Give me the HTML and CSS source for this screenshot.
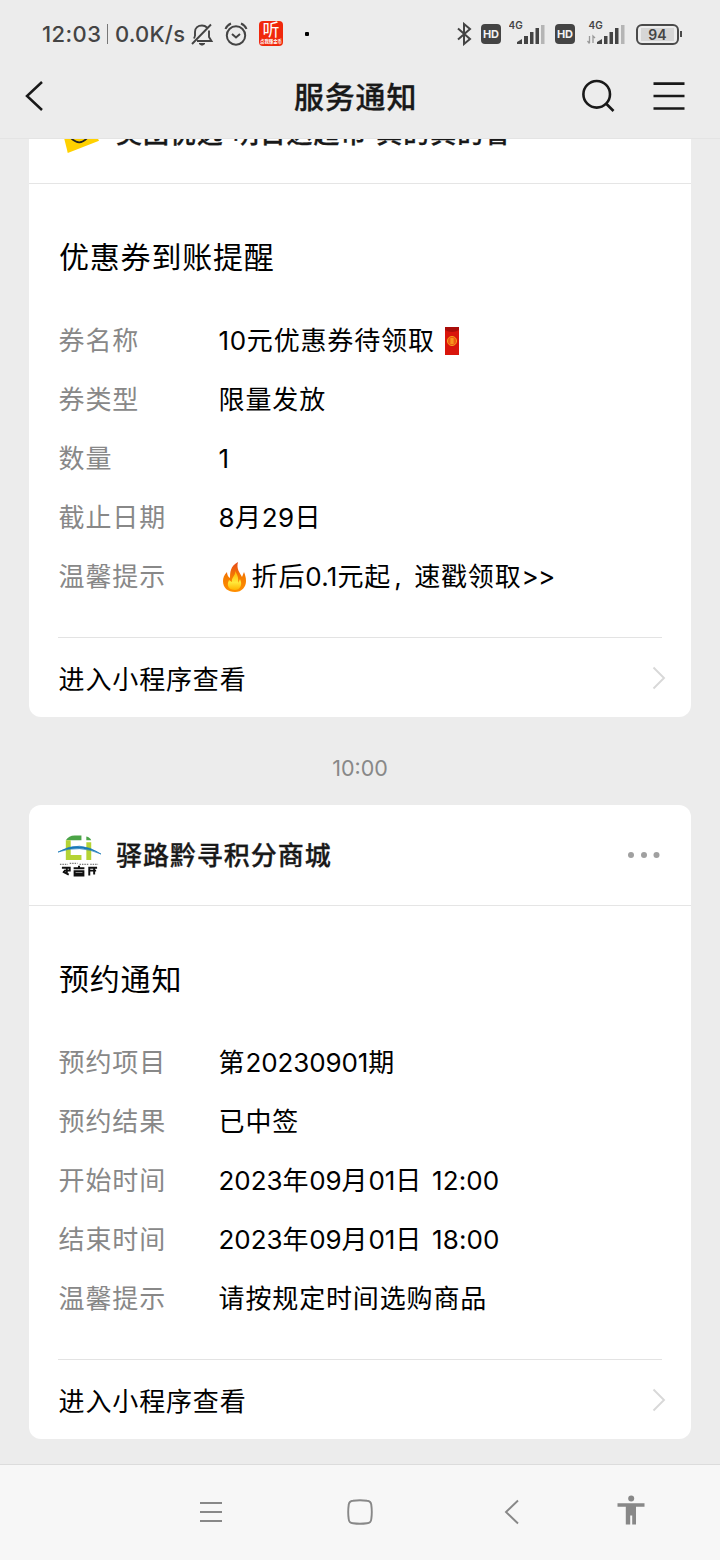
FILE: index.html
```
<!DOCTYPE html>
<html lang="zh-CN">
<head>
<meta charset="utf-8">
<title>服务通知</title>
<link rel="stylesheet" href="styles.css">
</head>
<body>
<div class="screen">
  <header class="top">
    <div class="status">
      <span class="clock">12:03</span><i class="sep"></i><span class="speed">0.0K/s</span>
      <svg class="bell" width="24" height="26" viewBox="0 0 24 26" fill="none" stroke="#444" stroke-width="1.9"><path d="M5 15V11C5 7 8 4.500 12 4.500C14 4.500 16 5.500 17 6.500M19 9.500V16L21.500 20H7M4 17.500L5 15M2 23L21 3.500"/><path d="M9 22.500h6l-2 1.500h-2z" fill="#444" stroke-width="1"/></svg>
      <svg class="alarm" width="24" height="26" viewBox="0 0 24 26" fill="none" stroke="#444" stroke-width="2"><circle cx="12" cy="14.500" r="9.200"/><path d="M8 13l4 3.500 4-3.500M1.500 8C2.500 5.500 4.500 3.500 7 2.500M22.500 8C21.500 5.500 19.500 3.500 17 2.500"/></svg>
      <span class="app"><b>听</b><small>点我赚金币</small></span>
      <i class="dot"></i>
      <svg class="bt" width="16" height="24" viewBox="0 0 16 24" fill="none" stroke="#444" stroke-width="2"><path d="M2 6.500L14 17L8 22V2l6 5L2 17.500"/></svg>
      <span class="hd">HD</span>
      <svg class="signal s1" width="40" height="26" viewBox="0 0 40 26"><text x="-.5" y="9" class="gen">4G</text><path fill="#444" d="M8 24v-2l5-3v5zM15 24v-8h4v8zM21 24V12h3.500v12zM26.500 24V8H30v16z"/><path fill="#b5b5b5" d="M32 24V5h3.500v19z"/></svg>
      <span class="hd">HD</span>
      <svg class="signal s2" width="40" height="26" viewBox="0 0 40 26"><text x="1.500" y="9" class="gen">4G</text><path d="M2.500 16v7M.5 21l2 2.500M6 23v-7l2 2" fill="none" stroke="#999" stroke-width="1.300"/><path fill="#444" d="M10 24v-2l5-3v5zM17 24v-8h3.500v8zM22.500 24V12H26v12zM28 24V8h3.500v16z"/><path fill="#b5b5b5" d="M34 24V5h3.500v19z"/></svg>
      <span class="battery"><span>94</span></span><i class="cap"></i>
    </div>
    <div class="title-bar">
      <svg class="back" width="24" height="36" viewBox="0 0 24 36" fill="none" stroke="#191919" stroke-width="2.500"><path d="M19 4L4 18L19 32"/></svg>
      <h1>服务通知</h1>
      <svg class="search" width="36" height="36" viewBox="0 0 36 36" fill="none" stroke="#191919" stroke-width="2.600"><circle cx="16.700" cy="16.300" r="13.300"/><path d="M26 25.500l7.500 7.500"/></svg>
      <svg class="menu" width="32" height="30" viewBox="0 0 32 30" stroke="#191919" stroke-width="2.700"><path d="M.5 2.700h31M.5 15h31M.5 27.500h31"/></svg>
    </div>
  </header>

  <main class="feed">
    <section class="card first">
      <div class="card-head">
        <svg class="logo" width="44" height="44" viewBox="0 0 44 44"><path fill="#ffd100" d="M4 18L31 8L42 30L10 42.500z"/><path d="M13 27q9 9 17 0" fill="none" stroke="#222" stroke-width="1.800"/></svg>
        <h2>美团优选 明日达超市 真的真的省</h2>
      </div>
      <div class="card-body">
        <h3>优惠券到账提醒</h3>
        <dl>
          <dt>券名称</dt><dd><span class="n ten">10</span>元优惠券待领取<svg class="packet" width="16" height="28" viewBox="0 0 16 28"><path fill="#d9150b" d="M1 0h14v28H1z"/><path fill="#a90d0a" d="M1 0h14v3q-7 4-14 0z"/><circle cx="8" cy="14" r="4.600" fill="#ee5a12" stroke="#f49a1a"/><path d="M6 12h4M6 14h4M6 16h4M8 11v6" stroke="#ffc22a" stroke-width=".7"/></svg></dd>
          <dt>券类型</dt><dd>限量发放</dd>
          <dt>数量</dt><dd><span class="n">1</span></dd>
          <dt>截止日期</dt><dd><span class="n date">8</span>月<span class="n date">29</span>日</dd>
          <dt>温馨提示</dt><dd><svg class="fire" width="26" height="32" viewBox="0 0 26 32"><defs><linearGradient id="flame" x2="0" y2="1"><stop stop-color="#e64a19"/><stop offset=".5" stop-color="#f57c00"/><stop offset="1" stop-color="#ff8f00"/></linearGradient><linearGradient id="core" x2="0" y2="1"><stop stop-color="#ffb300"/><stop offset=".6" stop-color="#ffe83b"/><stop offset="1" stop-color="#ffb300"/></linearGradient></defs><path fill="url(#flame)" d="M16 1C8 5 8 12 8 17C6 16 5 13 5 11C2 14 1 17 1 20C1 27 6 31 13 31C20 31 24 26 24 20C24 16 23 14 22 11L20 16C18 12 14 8 16 1z"/><path fill="url(#core)" d="M13 10C14 15 9 16 10 21L7 19C4 25 7 29 13 29C18 29 21 24 18 18L16 22C17 17 15 13 13 10z"/></svg>折后<span class="n price">0.1</span>元起<span class="comma">,</span>速戳领取<span class="n gt">&gt;&gt;</span></dd>
        </dl>
      </div>
      <div class="card-foot"><span>进入小程序查看</span><svg width="14" height="24" viewBox="0 0 14 24" fill="none" stroke="#d8d8d8" stroke-width="1.900"><path d="M1.500 1.500L12 12L1.500 22.500"/></svg></div>
    </section>

    <time>10:00</time>

    <section class="card">
      <div class="card-head">
        <svg class="logo" width="44" height="44" viewBox="0 0 44 44"><path fill="#4ba447" d="M8 7q3-5 9-5h7v5z"/><path fill="#b5d334" d="M8 7h5v15h11v5H8zM29 9h5v18h-5z"/><path fill="#4ba447" d="M29 3q4 1 5 4h-5z"/><path d="M0 19Q22 6 44 21Q22 11 0 19z" fill="#1878b8" stroke="#1878b8" stroke-width=".7"/><path d="M2 31.500h8m2-1h8m2 1h9m2 0h8" stroke="#555" stroke-width="1" stroke-dasharray="1.500 1"/><path d="M4 35h8v3H6M9 35v7M5 39l6 3M16 35.500h11M21.500 33v3M17 38.500h9V43h-9zM17 41h9M32 43v-8h8M32 38h7M37 35v7" fill="none" stroke="#111" stroke-width="2"/></svg>
        <h2>驿路黔寻积分商城</h2>
        <svg class="more" width="34" height="8" viewBox="0 0 34 8" fill="#a0a0a0"><circle cx="4" cy="4" r="3"/><circle cx="17" cy="4" r="3"/><circle cx="29.500" cy="4" r="3"/></svg>
      </div>
      <div class="card-body">
        <h3>预约通知</h3>
        <dl>
          <dt>预约项目</dt><dd>第<span class="n">20230901</span>期</dd>
          <dt>预约结果</dt><dd>已中签</dd>
          <dt>开始时间</dt><dd><span class="n">2023</span>年<span class="n">09</span>月<span class="n">01</span>日<span class="n hour">12:00</span></dd>
          <dt>结束时间</dt><dd><span class="n">2023</span>年<span class="n">09</span>月<span class="n">01</span>日<span class="n hour">18:00</span></dd>
          <dt>温馨提示</dt><dd>请按规定时间选购商品</dd>
        </dl>
      </div>
      <div class="card-foot"><span>进入小程序查看</span><svg width="14" height="24" viewBox="0 0 14 24" fill="none" stroke="#d8d8d8" stroke-width="1.900"><path d="M1.500 1.500L12 12L1.500 22.500"/></svg></div>
    </section>
  </main>

  <nav class="nav">
    <svg class="nav-menu" width="24" height="22" viewBox="0 0 24 22" stroke="#888" stroke-width="1.900"><path d="M1 2h22M1 11h22M1 20h22"/></svg>
    <svg class="nav-home" width="26" height="26" viewBox="0 0 26 26" fill="none" stroke="#888" stroke-width="1.900"><path d="M6 1.700Q13 .7 20 1.700Q24 2 24.300 6Q25.300 13 24.300 20Q24 24 20 24.300Q13 25.300 6 24.300Q2 24 1.700 20Q.7 13 1.700 6Q2 2 6 1.700z"/></svg>
    <svg class="nav-back" width="16" height="26" viewBox="0 0 16 26" fill="none" stroke="#888" stroke-width="1.900"><path d="M14 1.500L2 13L14 24.500"/></svg>
    <svg class="nav-person" width="28" height="30" viewBox="0 0 28 30" fill="#888"><circle cx="14.200" cy="3.500" r="3"/><path d="M.5 8.300h27v3.400h-8.500V29.500h-3.800v-9h-2v9H8.800V11.700H.5z"/></svg>
  </nav>
</div>
</body>
</html>
```
FILE: styles.css
```
* { box-sizing: border-box; margin: 0; padding: 0; }
body { background: #ececec; font-family: Inter, "Noto Sans CJK SC", sans-serif; color: #000; }
svg { display: block; flex: none; }
.screen { width: 720px; height: 1560px; display: flex; flex-direction: column; overflow: hidden; }

.top { height: 139px; flex: none; border-bottom: 1px solid #e4e4e4; }
.status { height: 68px; display: flex; align-items: center; padding-left: 42px; color: #444; font-size: 22px; white-space: nowrap; }
.clock { width: 65px; font-weight: 450; letter-spacing: .4px; }
.sep { width: 1px; height: 20px; background: #777; }
.speed { width: 75px; margin-left: 7px; font-weight: 450; letter-spacing: .2px; }
.alarm { margin-left: 10px; }
.app { width: 24px; height: 25px; margin-left: 11px; margin-top: -1px; border-radius: 4px; background: #f0280c; color: #fff; display: flex; flex-direction: column; align-items: center; overflow: hidden; }
.app b { font-size: 17px; line-height: 18px; font-weight: 400; }
.app small { font-size: 4.400px; line-height: 6px; font-weight: 700; }
.dot { width: 4px; height: 4px; background: #000; border-radius: 1px; margin-left: 22px; margin-top: -1px; }
.bt { margin-left: 147px; }
.hd { width: 20px; height: 20px; border-radius: 4px; background: #444; color: #f2f2f2; font: 700 11px/20px Inter, sans-serif; text-align: center; margin-left: 9px; }
.signal { margin-left: 8px; margin-top: -3px; }
.s1 + .hd { margin-left: 6px; }
.s2 { margin-left: 12px; }
.gen { font: 600 10px Inter, sans-serif; fill: #444; }
.battery { width: 43px; height: 21px; margin-left: 9px; border: 2.500px solid #4a4a4a; border-radius: 6px; padding: 2px 3px; display: flex; }
.battery span { flex: 1; background: #d6d6d6; font-size: 14px; line-height: 13px; font-weight: 600; text-align: center; }
.cap { width: 2px; height: 6px; background: #4a4a4a; margin-left: 1px; }

.title-bar { height: 56px; display: flex; align-items: center; padding-left: 23px; }
.title-bar h1 { width: 150px; margin-left: 247px; font-size: 30px; font-weight: 500; line-height: 44px; letter-spacing: .8px; color: #191919; -webkit-text-stroke: .3px #191919; padding-top: 1px; }
.search { margin-left: 136px; }
.menu { margin-left: 37px; }

.feed { height: 1325px; flex: none; overflow: hidden; padding: 0 29px; }
.card { height: 634px; background: #fff; border-radius: 12px; display: flex; flex-direction: column; }
.card.first { margin-top: -56px; }
.card-head { height: 101px; display: flex; align-items: center; padding: 0 30px 0 29px; border-bottom: 1px solid #e5e5e5; }
.card-head h2 { margin-left: 15px; font-size: 26px; line-height: 40px; font-weight: 500; letter-spacing: .95px; word-spacing: 1px; color: #191919; white-space: nowrap; padding-top: 2px; -webkit-text-stroke: .3px #191919; }
.logo { width: 43px; }
.more { margin-left: auto; }
.card-body { height: 454px; margin: 0 29px; border-bottom: 1px solid #e3e3e3; }
.card-body h3 { margin-left: 1px; padding-top: 51px; height: 128px; font-size: 30px; line-height: 44px; font-weight: 400; letter-spacing: .8px; }
dl { display: grid; grid-template-columns: 160px 1fr; grid-auto-rows: 59px; margin-left: .6px; font-size: 26px; line-height: 58px; letter-spacing: .85px; white-space: nowrap; }
dt { color: #888; }
dd { display: flex; align-items: center; height: 58px; }
.n { letter-spacing: -.1px; }
.ten { letter-spacing: .6px; }
.date { letter-spacing: .3px; }
.price { letter-spacing: .2px; }
.hour { margin-left: 10px; letter-spacing: .1px; }
.packet { margin-left: 9px; }
.fire { margin: -1px 4px 0 3px; }
.comma { width: 23px; padding-left: 3px; }
.gt { letter-spacing: -.9px; }
.card-foot { height: 79px; display: flex; align-items: center; justify-content: space-between; padding: 0 25px 0 29.600px; font-size: 26px; letter-spacing: .85px; }
.feed time { display: block; height: 88px; line-height: 87px; padding-top: 8px; text-align: center; font-size: 21.500px; color: #888; }

.nav { flex: 1; background: #f7f7f7; border-top: 1px solid #dcdcdc; display: flex; align-items: center; padding: 0 0 2px 199px; }
.nav-home { margin-left: 124px; }
.nav-back { margin-left: 131px; }
.nav-person { margin-left: 97px; margin-top: -3px; }
```
